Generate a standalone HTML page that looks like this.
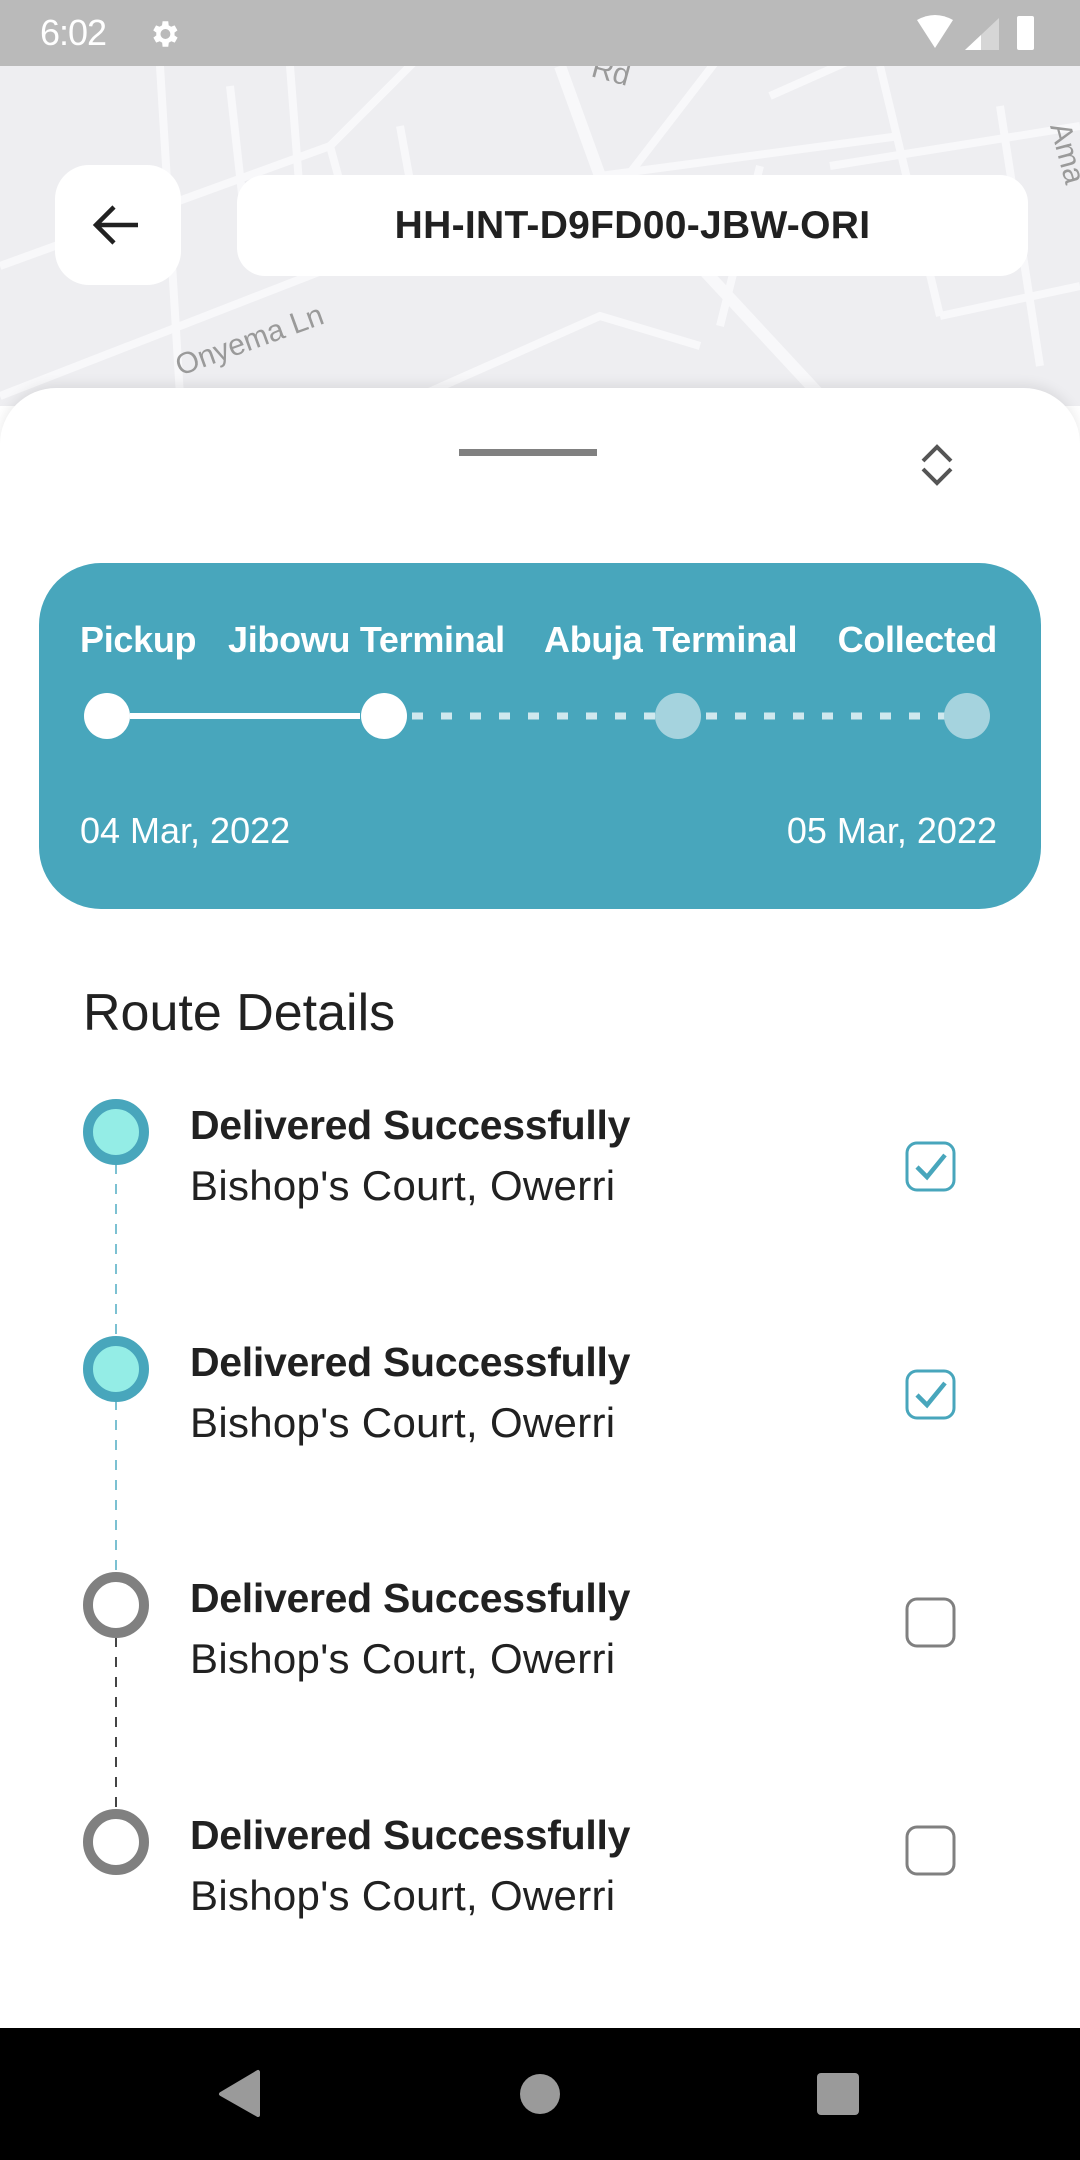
<!DOCTYPE html>
<html><head><meta charset="utf-8"><style>
*{margin:0;padding:0;box-sizing:border-box}
body{width:1080px;height:2160px;position:relative;overflow:hidden;background:#fff;font-family:"Liberation Sans",sans-serif;color:#212121}
.a{position:absolute;white-space:nowrap}
</style></head><body>
<!-- map -->
<div class="a" style="left:0;top:66px;width:1080px;height:340px;background:#eeeef1;overflow:hidden">
<svg width="1080" height="340" style="position:absolute;left:0;top:0" fill="none" stroke="#f8f8fa" stroke-width="8">
<path d="M0 200 L330 80 L420 -10"/><path d="M0 330 L360 190 L620 120 L720 -10"/>
<path d="M160 0 L180 330"/><path d="M230 20 L250 200"/><path d="M330 80 L360 190"/>
<path d="M290 0 L300 130"/><path d="M400 60 L420 170"/><path d="M560 0 L600 110 L700 200 L830 340" stroke-width="12"/>
<path d="M600 110 L900 70"/><path d="M770 30 L860 -10"/><path d="M830 100 L1080 60"/>
<path d="M760 100 L720 260"/><path d="M880 0 L940 250"/><path d="M1000 40 L1040 300"/>
<path d="M420 330 L600 250 L700 280"/><path d="M940 250 L1080 220"/>
<text x="0" y="0" transform="translate(180 310) rotate(-20)" font-family="Liberation Sans" font-size="30" fill="#9a9a9a" stroke="none">Onyema Ln</text>
<text x="0" y="0" transform="translate(590 10) rotate(15)" font-family="Liberation Sans" font-size="30" fill="#9a9a9a" stroke="none">Rd</text>
<text x="0" y="0" transform="translate(1050 60) rotate(75)" font-family="Liberation Sans" font-size="30" fill="#9a9a9a" stroke="none">Ama</text>
</svg></div>
<!-- status bar -->
<div class="a" style="left:0;top:0;width:1080px;height:66px;background:#bababa"></div>
<div class="a" style="left:40px;top:12px;font-size:36px;color:#fff;letter-spacing:-1px">6:02</div>
<svg class="a" style="left:147px;top:17px" width="34" height="34" viewBox="0 0 24 24"><path fill="#fff" d="M19.4 13a7.5 7.5 0 000-2l2.1-1.6-2-3.5-2.5 1a7 7 0 00-1.7-1L15 3h-4l-.4 2.9a7 7 0 00-1.7 1l-2.5-1-2 3.5L6.6 11a7.5 7.5 0 000 2l-2.1 1.6 2 3.5 2.5-1a7 7 0 001.7 1L11 21h4l.4-2.9a7 7 0 001.7-1l2.5 1 2-3.5zM13 15.5a3.5 3.5 0 110-7 3.5 3.5 0 010 7z"/></svg>
<svg class="a" style="left:915px;top:14px" width="130" height="38"><path d="M2 6 Q20 -4 38 6 L20 34 Z" fill="#fff"/><path d="M50 36 L84 4 L84 36Z" fill="#d6d6d6"/><path d="M50 36 L66 21 L66 36Z" fill="#fff"/><rect x="102" y="2" width="17" height="34" rx="2" fill="#fff"/></svg>
<!-- back button -->
<div class="a" style="left:55px;top:165px;width:126px;height:120px;background:#fff;border-radius:34px"></div>
<svg class="a" style="left:92px;top:202px" width="50" height="46" viewBox="0 0 50 46"><path d="M46 23 H6 M22 5 L4 23 L22 41" stroke="#212121" stroke-width="4.5" fill="none"/></svg>
<div class="a" style="left:237px;top:175px;width:791px;height:101px;background:#fff;border-radius:28px;text-align:center;line-height:101px;font-size:39px;font-weight:bold;letter-spacing:0.3px">HH-INT-D9FD00-JBW-ORI</div>
<!-- sheet -->
<div class="a" style="left:0;top:388px;width:1080px;height:1700px;background:#fff;border-radius:56px 56px 0 0;box-shadow:0 -4px 12px rgba(0,0,0,.08)"></div>
<div class="a" style="left:459px;top:449px;width:138px;height:7px;background:#808080"></div>
<svg class="a" style="left:918px;top:442px" width="38" height="46" viewBox="0 0 38 46"><path d="M5 19 L19 5 L33 19 M5 27 L19 41 L33 27" stroke="#555" stroke-width="4" fill="none"/></svg>
<!-- teal card -->
<div class="a" style="left:39px;top:563px;width:1002px;height:346px;background:#48a6bc;border-radius:62px"></div>
<div class="a" style="left:80px;top:619px;font-size:36px;font-weight:bold;color:#fff;letter-spacing:-0.3px">Pickup</div>
<div class="a" style="left:228px;top:619px;font-size:36px;font-weight:bold;color:#fff;letter-spacing:-0.3px">Jibowu Terminal</div>
<div class="a" style="left:544px;top:619px;font-size:36px;font-weight:bold;color:#fff;letter-spacing:-0.3px">Abuja Terminal</div>
<div class="a" style="right:83px;top:619px;font-size:36px;font-weight:bold;color:#fff;letter-spacing:-0.3px">Collected</div>
<svg class="a" style="left:0;top:680px" width="1080" height="80">
<line x1="130" y1="36" x2="360" y2="36" stroke="#fff" stroke-width="6"/>
<line x1="412" y1="36" x2="660" y2="36" stroke="#cfe8ee" stroke-width="7" stroke-dasharray="11 18"/>
<line x1="706" y1="36" x2="950" y2="36" stroke="#cfe8ee" stroke-width="7" stroke-dasharray="11 18"/>
<circle cx="107" cy="36" r="23" fill="#fff"/><circle cx="384" cy="36" r="23" fill="#fff"/>
<circle cx="678" cy="36" r="23" fill="#a5d3de"/><circle cx="967" cy="36" r="23" fill="#a5d3de"/>
</svg>
<div class="a" style="left:80px;top:810px;font-size:36px;color:#fff">04 Mar, 2022</div>
<div class="a" style="right:83px;top:810px;font-size:36px;color:#fff">05 Mar, 2022</div>
<!-- route details -->
<div class="a" style="left:83px;top:983px;font-size:52px;color:#212121">Route Details</div>
<svg class="a" style="left:0;top:1080px" width="200" height="820">
<line x1="116" y1="84" x2="116" y2="255" stroke="#7cc1d2" stroke-width="2" stroke-dasharray="10 10"/>
<line x1="116" y1="320" x2="116" y2="492" stroke="#7cc1d2" stroke-width="2" stroke-dasharray="10 10"/>
<line x1="116" y1="557" x2="116" y2="729" stroke="#444" stroke-width="2" stroke-dasharray="10 10"/>
<circle cx="116" cy="52" r="28" fill="#94ede6" stroke="#48a6bc" stroke-width="10"/>
<circle cx="116" cy="289" r="28" fill="#94ede6" stroke="#48a6bc" stroke-width="10"/>
<circle cx="116" cy="525" r="28" fill="#fff" stroke="#808080" stroke-width="10"/>
<circle cx="116" cy="762" r="28" fill="#fff" stroke="#808080" stroke-width="10"/>
</svg>
<div class="a" style="left:190px;top:1102px;font-size:41px;font-weight:bold;letter-spacing:-0.3px">Delivered Successfully</div>
<div class="a" style="left:190px;top:1162px;font-size:42px;letter-spacing:0.3px">Bishop's Court, Owerri</div>
<div class="a" style="left:190px;top:1339px;font-size:41px;font-weight:bold;letter-spacing:-0.3px">Delivered Successfully</div>
<div class="a" style="left:190px;top:1399px;font-size:42px;letter-spacing:0.3px">Bishop's Court, Owerri</div>
<div class="a" style="left:190px;top:1575px;font-size:41px;font-weight:bold;letter-spacing:-0.3px">Delivered Successfully</div>
<div class="a" style="left:190px;top:1635px;font-size:42px;letter-spacing:0.3px">Bishop's Court, Owerri</div>
<div class="a" style="left:190px;top:1812px;font-size:41px;font-weight:bold;letter-spacing:-0.3px">Delivered Successfully</div>
<div class="a" style="left:190px;top:1872px;font-size:42px;letter-spacing:0.3px">Bishop's Court, Owerri</div>
<svg class="a" style="left:900px;top:1136px" width="64" height="740">
<rect x="7" y="7" width="47" height="47" rx="10" fill="none" stroke="#48a6bc" stroke-width="3"/>
<path d="M17 31 L27 41 L45 19" stroke="#48a6bc" stroke-width="4.5" fill="none"/>
<rect x="7" y="235" width="47" height="47" rx="10" fill="none" stroke="#48a6bc" stroke-width="3"/>
<path d="M17 259 L27 269 L45 247" stroke="#48a6bc" stroke-width="4.5" fill="none"/>
<rect x="7" y="463" width="47" height="47" rx="10" fill="none" stroke="#808080" stroke-width="3"/>
<rect x="7" y="691" width="47" height="47" rx="10" fill="none" stroke="#808080" stroke-width="3"/>
</svg>
<!-- nav bar -->
<div class="a" style="left:0;top:2028px;width:1080px;height:132px;background:#000"></div>
<svg class="a" style="left:0;top:2028px" width="1080" height="132">
<path d="M258 44 L258 87 L221 66 Z" fill="#9a9a9a" stroke="#9a9a9a" stroke-width="4" stroke-linejoin="round"/>
<circle cx="540" cy="66" r="20" fill="#9a9a9a"/>
<rect x="817" y="45" width="42" height="42" rx="4" fill="#9a9a9a"/>
</svg>
</body></html>
